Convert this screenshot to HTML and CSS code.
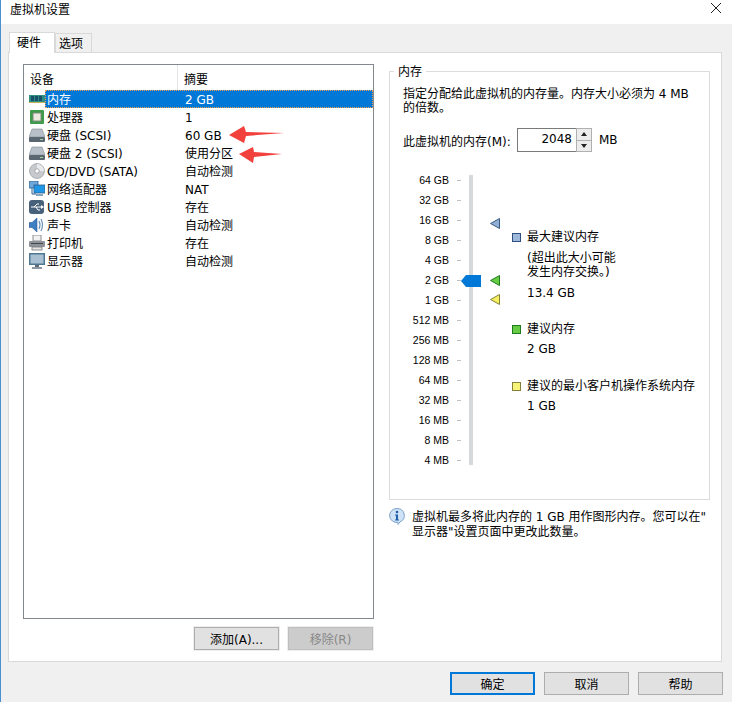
FILE: index.html
```html
<!DOCTYPE html>
<html lang="zh">
<head>
<meta charset="utf-8">
<title>虚拟机设置</title>
<link rel="stylesheet" href="styles.css">
</head>
<body>
<div class="window">
  <header class="titlebar">
    <span>虚拟机设置</span>
    <svg class="close" width="12" height="12" viewBox="0 0 12 12"><path d="M1 1l10 10M11 1L1 11" stroke="#222" stroke-width="1" fill="none"/></svg>
  </header>
  <nav class="tabs">
    <div class="tab active">硬件</div>
    <div class="tab">选项</div>
  </nav>
  <main class="panel">
    <section class="left">
      <div class="list">
        <div class="list-head"><div class="col-a">设备</div><div class="col-b">摘要</div></div>
        <div class="row selected">
          <svg class="ico" viewBox="0 0 16 16"><rect x="0" y="4" width="16" height="8" fill="#2f8f80"/><rect x="2" y="5" width="3" height="5" fill="#16506a"/><rect x="6" y="5" width="3" height="5" fill="#16506a"/><rect x="10" y="5" width="3" height="5" fill="#16506a"/><rect x="0" y="11" width="16" height="1" fill="#c8b060"/></svg>
          <div class="row-body"><span class="name">内存</span><span class="val">2 GB</span></div>
        </div>
        <div class="row">
          <svg class="ico" viewBox="0 0 16 16"><rect x="1" y="1" width="14" height="14" rx="1" fill="#3f9a4a"/><rect x="4" y="4" width="8" height="8" fill="#eceae0" stroke="#7d8a78"/></svg>
          <div class="row-body"><span class="name">处理器</span><span class="val">1</span></div>
        </div>
        <div class="row">
          <svg class="ico" viewBox="0 0 16 16"><path d="M3 2h10l3 8H0z" fill="#b7c0c8" stroke="#7f8a94" stroke-width=".6"/><rect x="0" y="10" width="16" height="5" rx="1" fill="#5a6670"/><rect x="11" y="12" width="3" height="1" fill="#9fd39f"/></svg>
          <div class="row-body"><span class="name">硬盘 (SCSI)</span><span class="val">60 GB</span></div>
        </div>
        <div class="row">
          <svg class="ico" viewBox="0 0 16 16"><path d="M3 2h10l3 8H0z" fill="#b7c0c8" stroke="#7f8a94" stroke-width=".6"/><rect x="0" y="10" width="16" height="5" rx="1" fill="#5a6670"/><rect x="11" y="12" width="3" height="1" fill="#9fd39f"/></svg>
          <div class="row-body"><span class="name">硬盘 2 (SCSI)</span><span class="val">使用分区</span></div>
        </div>
        <div class="row">
          <svg class="ico" viewBox="0 0 16 16"><circle cx="8" cy="8" r="7.500" fill="#c6cace" stroke="#9a9ea2" stroke-width=".7"/><path d="M8 1a7 7 0 0 1 7 7H10a2 2 0 0 0-2-2z" fill="#e8eaec"/><circle cx="8" cy="8" r="2.200" fill="#fff" stroke="#8e9296" stroke-width=".7"/></svg>
          <div class="row-body"><span class="name">CD/DVD (SATA)</span><span class="val">自动检测</span></div>
        </div>
        <div class="row">
          <svg class="ico" viewBox="0 0 16 16"><rect x="0" y="0" width="9" height="7" fill="#6ea7d8" stroke="#2d5f8f" stroke-width=".8"/><path d="M3 7v6h4" fill="none" stroke="#2d5f8f"/><rect x="5" y="4" width="11" height="8" fill="#1f97e6" stroke="#2d5f8f" stroke-width=".8"/><rect x="7" y="13" width="7" height="2" fill="#8aa5bc"/></svg>
          <div class="row-body"><span class="name">网络适配器</span><span class="val">NAT</span></div>
        </div>
        <div class="row">
          <svg class="ico" viewBox="0 0 16 16"><rect x="0" y="1" width="15" height="14" rx="3" fill="#47617a"/><path d="M2 8h10M5 8l3-3h2M7 8l2 3h2" stroke="#fff" stroke-width="1" fill="none"/><path d="M12 6l3 2-3 2z" fill="#fff"/></svg>
          <div class="row-body"><span class="name">USB 控制器</span><span class="val">存在</span></div>
        </div>
        <div class="row">
          <svg class="ico" viewBox="0 0 16 16"><path d="M0 5.500h3L8 1v14l-5-4.500H0z" fill="#3f7fc4" stroke="#1f4f86" stroke-width=".5"/><path d="M10 4q2 4 0 8M12 2q3 6 0 12" fill="none" stroke="#6d93b8" stroke-width="1.200"/></svg>
          <div class="row-body"><span class="name">声卡</span><span class="val">自动检测</span></div>
        </div>
        <div class="row">
          <svg class="ico" viewBox="0 0 16 16"><rect x="4" y="0" width="8" height="6" fill="#f2f2f2" stroke="#777" stroke-width=".8"/><rect x="0" y="6" width="16" height="6" rx="1" fill="#8c9298"/><rect x="2" y="8" width="12" height="1" fill="#44494e"/><rect x="3" y="12" width="10" height="3" fill="#e6e6e6" stroke="#777" stroke-width=".8"/></svg>
          <div class="row-body"><span class="name">打印机</span><span class="val">存在</span></div>
        </div>
        <div class="row">
          <svg class="ico" viewBox="0 0 16 16"><rect x="0" y="0" width="16" height="12" fill="#4f7893"/><rect x="1.500" y="1.500" width="13" height="9" fill="#a9c0d2"/><rect x="6" y="12" width="4" height="2" fill="#5f6a74"/><rect x="3" y="14" width="10" height="2" fill="#8d98a2"/></svg>
          <div class="row-body"><span class="name">显示器</span><span class="val">自动检测</span></div>
        </div>
        <svg class="arrow arrow-a" width="56" height="18" viewBox="0 0 56 18"><path d="M0 10L15 1l2 6 38 1-38 3-2 7z" fill="#f2403c"/></svg>
        <svg class="arrow arrow-b" width="44" height="16" viewBox="0 0 44 16"><path d="M0 7L14 0l1 5 28 2-28 3-1 6z" fill="#f2403c"/></svg>
      </div>
      <div class="list-actions">
        <button class="btn small">添加(A)...</button>
        <button class="btn small disabled">移除(R)</button>
      </div>
    </section>
    <section class="right">
      <div class="group">
        <div class="group-title">内存</div>
        <p class="desc">指定分配给此虚拟机的内存量。内存大小必须为 4 MB 的倍数。</p>
        <div class="mem-line">
          <span class="mem-label">此虚拟机的内存(M):</span>
          <div class="spin">
            <span class="spin-val">2048</span>
            <div class="spin-btns"><span class="up"></span><span class="down"></span></div>
          </div>
          <span class="mem-unit">MB</span>
        </div>
        <div class="meter">
          <div class="scale">
            <div class="tick"><span>64 GB</span><i></i></div>
            <div class="tick"><span>32 GB</span><i></i></div>
            <div class="tick"><span>16 GB</span><i></i></div>
            <div class="tick"><span>8 GB</span><i></i></div>
            <div class="tick"><span>4 GB</span><i></i></div>
            <div class="tick"><span>2 GB</span><i></i></div>
            <div class="tick"><span>1 GB</span><i></i></div>
            <div class="tick"><span>512 MB</span><i></i></div>
            <div class="tick"><span>256 MB</span><i></i></div>
            <div class="tick"><span>128 MB</span><i></i></div>
            <div class="tick"><span>64 MB</span><i></i></div>
            <div class="tick"><span>32 MB</span><i></i></div>
            <div class="tick"><span>16 MB</span><i></i></div>
            <div class="tick"><span>8 MB</span><i></i></div>
            <div class="tick"><span>4 MB</span><i></i></div>
          </div>
          <div class="track"></div>
          <svg class="thumb" width="20" height="12" viewBox="0 0 20 12"><path d="M0 6L5 0h15v12H5z" fill="#0078d7"/></svg>
          <svg class="mark mark-blue" width="10" height="11" viewBox="0 0 10 11"><path d="M9.500 .5v10L.5 5.500z" fill="#8fb0d4" stroke="#3b5b85"/></svg>
          <svg class="mark mark-green" width="10" height="11" viewBox="0 0 10 11"><path d="M9.500 .5v10L.5 5.500z" fill="#66cc44" stroke="#1f7a1f"/></svg>
          <svg class="mark mark-yellow" width="10" height="11" viewBox="0 0 10 11"><path d="M9.500 .5v10L.5 5.500z" fill="#f4f060" stroke="#85803a"/></svg>
          <div class="legend">
            <div class="leg-item first">
              <div class="leg-head"><b class="sw sw-blue"></b>最大建议内存</div>
              <div class="leg-note">(超出此大小可能<br>发生内存交换。)</div>
              <div class="leg-val note-val">13.4 GB</div>
            </div>
            <div class="leg-item second">
              <div class="leg-head"><b class="sw sw-green"></b>建议内存</div>
              <div class="leg-val">2 GB</div>
            </div>
            <div class="leg-item third">
              <div class="leg-head"><b class="sw sw-yellow"></b>建议的最小客户机操作系统内存</div>
              <div class="leg-val">1 GB</div>
            </div>
          </div>
        </div>
      </div>
      <div class="info">
        <svg class="info-ico" width="16" height="17" viewBox="0 0 16 17"><path d="M8 .5a7.200 7 0 0 1 3 13.400L9 16.500V14.400A7.200 7 0 1 1 8 .5z" fill="#cfe2f6" stroke="#7fa4cc"/><circle cx="8" cy="4" r="1.300" fill="#1f5fa8"/><path d="M6 6.500h3v5h1v1H6v-1h1v-4H6z" fill="#1f5fa8"/></svg>
        <p>虚拟机最多将此内存的 1 GB 用作图形内存。您可以在"<br>显示器"设置页面中更改此数量。</p>
      </div>
    </section>
  </main>
  <footer class="footer">
    <button class="btn primary">确定</button>
    <button class="btn">取消</button>
    <button class="btn">帮助</button>
  </footer>
</div>
</body>
</html>
```
FILE: styles.css
```css
* { box-sizing: border-box; }
html, body { margin: 0; padding: 0; }
body {
  width: 732px;
  height: 702px;
  overflow: hidden;
  background: #f0f0f0;
  font-family: "DejaVu Sans", "Noto Sans CJK SC", sans-serif;
  font-size: 12px;
  color: #000;
}
.window {
  width: 732px;
  height: 702px;
  border-left: 1px solid #4a90d0;
  display: flex;
  flex-direction: column;
}
.titlebar {
  height: 24px;
  background: #fff;
  display: flex;
  align-items: center;
  justify-content: space-between;
  padding: 0 10px 8px 9px;
  font-size: 12px;
  flex: none;
}
.tabs {
  height: 28px;
  display: flex;
  align-items: flex-end;
  padding: 0 0 0 8px;
  flex: none;
}
.tab {
  width: 37px;
  height: 19px;
  background: #f0f0f0;
  border: 1px solid #d9d9d9;
  border-bottom: 0;
  padding-left: 3px;
  line-height: 20px;
}
.tab.active {
  width: 46px;
  height: 21px;
  background: #fff;
  margin-bottom: -1px;
  position: relative;
  padding-left: 7px;
  line-height: 20px;
}
.panel {
  width: 714px;
  height: 610px;
  margin-left: 7px;
  background: #fff;
  border: 1px solid #d9d9d9;
  display: flex;
  flex: none;
}
.left {
  width: 365px;
  padding: 11px 0 0 14px;
  flex: none;
}
.list {
  position: relative;
  width: 351px;
  height: 555px;
  border: 1px solid #828790;
  background: #fff;
}
.list-head { height: 25px; display: flex; line-height: 27px; }
.col-a { width: 154px; padding: 2px 0 0 6px; border-right: 1px solid #e5e5e5; }
.col-b { padding: 2px 0 0 6px; }
.row {
  height: 18px;
  display: flex;
  align-items: center;
  padding-left: 5px;
}
.ico { width: 16px; height: 16px; flex: none; }
.row-body {
  flex: 1;
  height: 18px;
  display: flex;
  align-items: center;
  padding: 2px 0 0 2px;
  line-height: 16px;
}
.selected .row-body {
  background: #0078d7;
  color: #fff;
  outline: 1px dotted #f2a050;
  outline-offset: -1px;
}
.name { width: 138px; white-space: nowrap; }
.val { white-space: nowrap; }
.arrow { position: absolute; }
.arrow-a { left: 205px; top: 60px; }
.arrow-b { left: 215px; top: 82px; }
.list-actions {
  display: flex;
  justify-content: flex-end;
  gap: 9px;
  margin-top: 8px;
  width: 350px;
}
.btn {
  width: 85px;
  height: 23px;
  padding: 0;
  background: #e1e1e1;
  border: 1px solid #adadad;
  font: inherit;
  color: #000;
}
.btn.small { outline: 1px solid #eeeeee; }
.btn.disabled { background: #cccccc; color: #888; border-color: #bfbfbf; }
.btn.primary { border: 2px solid #0078d7; }
.right { flex: 1; padding: 18px 0 0 15px; }
.group {
  position: relative;
  width: 321px;
  height: 429px;
  border: 1px solid #dcdcdc;
  padding: 15px 0 0 13px;
}
.group-title {
  position: absolute;
  top: -8px;
  left: 4px;
  padding: 0 4px;
  background: #fff;
  line-height: 16px;
}
.desc { margin: 0; width: 294px; line-height: 14px; }
.mem-line {
  display: flex;
  align-items: center;
  height: 24px;
  margin-top: 13px;
}
.mem-label { width: 114px; white-space: nowrap; }
.spin {
  width: 75px;
  height: 24px;
  border: 1px solid #7a7a7a;
  display: flex;
  justify-content: flex-end;
  background: #fff;
}
.spin-val { line-height: 20px; padding-right: 4px; }
.spin-btns {
  width: 16px;
  display: flex;
  flex-direction: column;
  margin: -1px -1px -1px 0;
  border: 1px solid #b0b0b0;
}
.spin-btns span {
  flex: 1;
  background: #ececec;
  position: relative;
}
.spin-btns .up { border-bottom: 1px solid #b0b0b0; }
.spin-btns .up::after,
.spin-btns .down::after {
  content: "";
  position: absolute;
  left: 4px;
  top: 3px;
  border-left: 3px solid transparent;
  border-right: 3px solid transparent;
}
.spin-btns .up::after { border-bottom: 4px solid #222; }
.spin-btns .down::after { border-top: 4px solid #222; }
.mem-unit { margin-left: 7px; }
.meter {
  position: relative;
  height: 290px;
  margin: 23px 0 0 -13px;
  display: flex;
}
.scale { width: 71px; flex: none; margin-top: -5px; }
.tick {
  height: 20px;
  display: flex;
  align-items: center;
  justify-content: flex-end;
  font-family: "Liberation Sans", "Noto Sans CJK SC", sans-serif;
  font-size: 10.5px;
  white-space: nowrap;
}
.tick span { margin-right: 8px; }
.tick i { width: 4px; height: 1px; background: #c0c0c0; margin-right: 0; }
.track {
  width: 4px;
  height: 290px;
  margin-left: 8px;
  background: #d6d9d9;
  flex: none;
}
.thumb { position: absolute; left: 71px; top: 100px; }
.mark { position: absolute; left: 100px; }
.mark-blue { top: 43px; }
.mark-green { top: 100px; }
.mark-yellow { top: 119px; }
.legend {
  position: absolute;
  left: 122px;
  top: 53px;
  width: 195px;
}
.leg-head {
  display: flex;
  align-items: center;
  line-height: 18px;
  white-space: nowrap;
}
.sw { width: 9px; height: 9px; margin-right: 6px; flex: none; border: 1px solid; }
.sw-blue { background: #9db8d8; border-color: #2f4f7f; }
.sw-green { background: #66cc44; border-color: #1f7a1f; }
.sw-yellow { background: #f8f47a; border-color: #85803a; }
.leg-note { margin: 5px 0 0 15px; line-height: 14px; }
.leg-val { margin: 2px 0 0 15px; line-height: 18px; }
.leg-val.note-val { margin-top: 5px; }
.leg-item.second { margin-top: 18px; }
.leg-item.third { margin-top: 19px; }
.info {
  display: flex;
  margin-top: 8px;
}
.info-ico { flex: none; margin-right: 7px; }
.info p { margin: 2px 0 0; line-height: 15px; white-space: nowrap; }
.footer {
  display: flex;
  justify-content: flex-end;
  gap: 9px;
  padding-right: 9px;
  margin-top: 10px;
}
```
